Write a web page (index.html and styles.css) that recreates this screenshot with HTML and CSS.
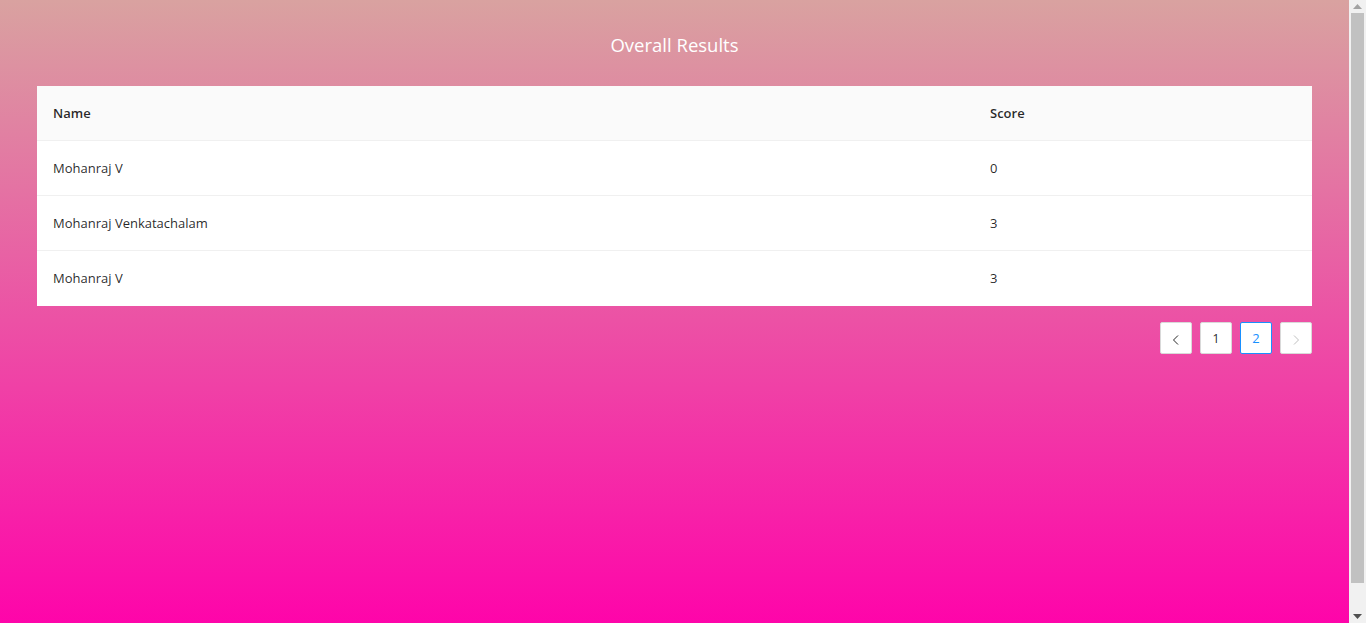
FILE: index.html
```html
<!DOCTYPE html>
<html lang="en">
<head>
<meta charset="utf-8">
<title>Overall Results</title>
<link rel="stylesheet" href="styles.css">
</head>
<body>
<div class="shell">
  <div class="page">
    <h2 class="title">Overall Results</h2>
    <div class="table-wrap">
      <table class="results">
        <colgroup><col class="col-name"><col></colgroup>
        <thead>
          <tr><th>Name</th><th>Score</th></tr>
        </thead>
        <tbody>
          <tr><td>Mohanraj V</td><td>0</td></tr>
          <tr><td>Mohanraj Venkatachalam</td><td>3</td></tr>
          <tr><td>Mohanraj V</td><td>3</td></tr>
        </tbody>
      </table>
    </div>
    <ul class="pager">
      <li class="pg-item pg-arrow">
        <svg width="12" height="12" viewBox="0 0 12 12"><path d="M8 1.5 L3.5 6 L8 10.5" fill="none" stroke="currentColor" stroke-width="1"/></svg>
      </li>
      <li class="pg-item">1</li>
      <li class="pg-item pg-active">2</li>
      <li class="pg-item pg-arrow pg-disabled">
        <svg width="12" height="12" viewBox="0 0 12 12"><path d="M4 1.5 L8.5 6 L4 10.5" fill="none" stroke="currentColor" stroke-width="1"/></svg>
      </li>
    </ul>
  </div>
  <div class="scrollbar">
    <div class="sb-btn"><svg width="9" height="5" viewBox="0 0 9 5"><path d="M0 5 L4.5 0 L9 5 Z" fill="#a3a3a3"/></svg></div>
    <div class="sb-track"><div class="sb-thumb"></div></div>
    <div class="sb-btn"><svg width="9" height="5" viewBox="0 0 9 5"><path d="M0 0 L4.5 5 L9 0 Z" fill="#505050"/></svg></div>
  </div>
</div>
</body>
</html>
```

FILE: styles.css
```css
html, body {
  margin: 0;
  padding: 0;
  overflow: hidden;
}
body {
  font-family: "Open Sans", "Noto Sans", sans-serif;
  font-size: 13px;
  color: rgba(0, 0, 0, 0.85);
}
.shell {
  display: flex;
  height: 623px;
}
.page {
  flex: 1;
  box-sizing: border-box;
  padding: 31px 37px 0;
  background: linear-gradient(180deg, #d9a2a0 0%, #ff00aa 103%);
}
.title {
  margin: 0 0 27px;
  text-align: center;
  font-size: 18.5px;
  line-height: 28px;
  font-weight: 400;
  color: #ffffff;
}
.table-wrap {
  background: #ffffff;
}
.results {
  width: 100%;
  border-collapse: collapse;
  table-layout: fixed;
}
.col-name {
  width: 937px;
}
.results th,
.results td {
  text-align: left;
  padding: 0 16px;
  height: 54px;
  border-bottom: 1px solid #f0f0f0;
  line-height: 22px;
}
.results th {
  background: #fafafa;
  font-weight: 600;
  color: rgba(0, 0, 0, 0.85);
}
.results tbody tr:last-child td {
  border-bottom-color: #ffffff;
}
.pager {
  list-style: none;
  margin: 16px 0 0;
  padding: 0;
  display: flex;
  justify-content: flex-end;
  gap: 8px;
}
.pg-item {
  width: 32px;
  height: 32px;
  box-sizing: border-box;
  border: 1px solid #d9d9d9;
  border-radius: 2px;
  background: #ffffff;
  display: flex;
  align-items: center;
  justify-content: center;
  font-size: 13px;
  color: rgba(0, 0, 0, 0.85);
}
.pg-arrow svg {
  display: block;
  margin-top: 3px;
}
.pg-active {
  border-color: #1890ff;
  color: #1890ff;
}
.pg-disabled {
  color: rgba(0, 0, 0, 0.25);
}
.scrollbar {
  width: 17px;
  background: #f1f1f1;
  display: flex;
  flex-direction: column;
}
.sb-btn {
  height: 13px;
  display: flex;
  align-items: center;
  justify-content: center;
}
.sb-track {
  flex: 1;
  padding: 0 2px;
  display: flex;
}
.sb-thumb {
  flex: 1;
  margin-bottom: 27px;
  background: #c1c1c1;
}
```
